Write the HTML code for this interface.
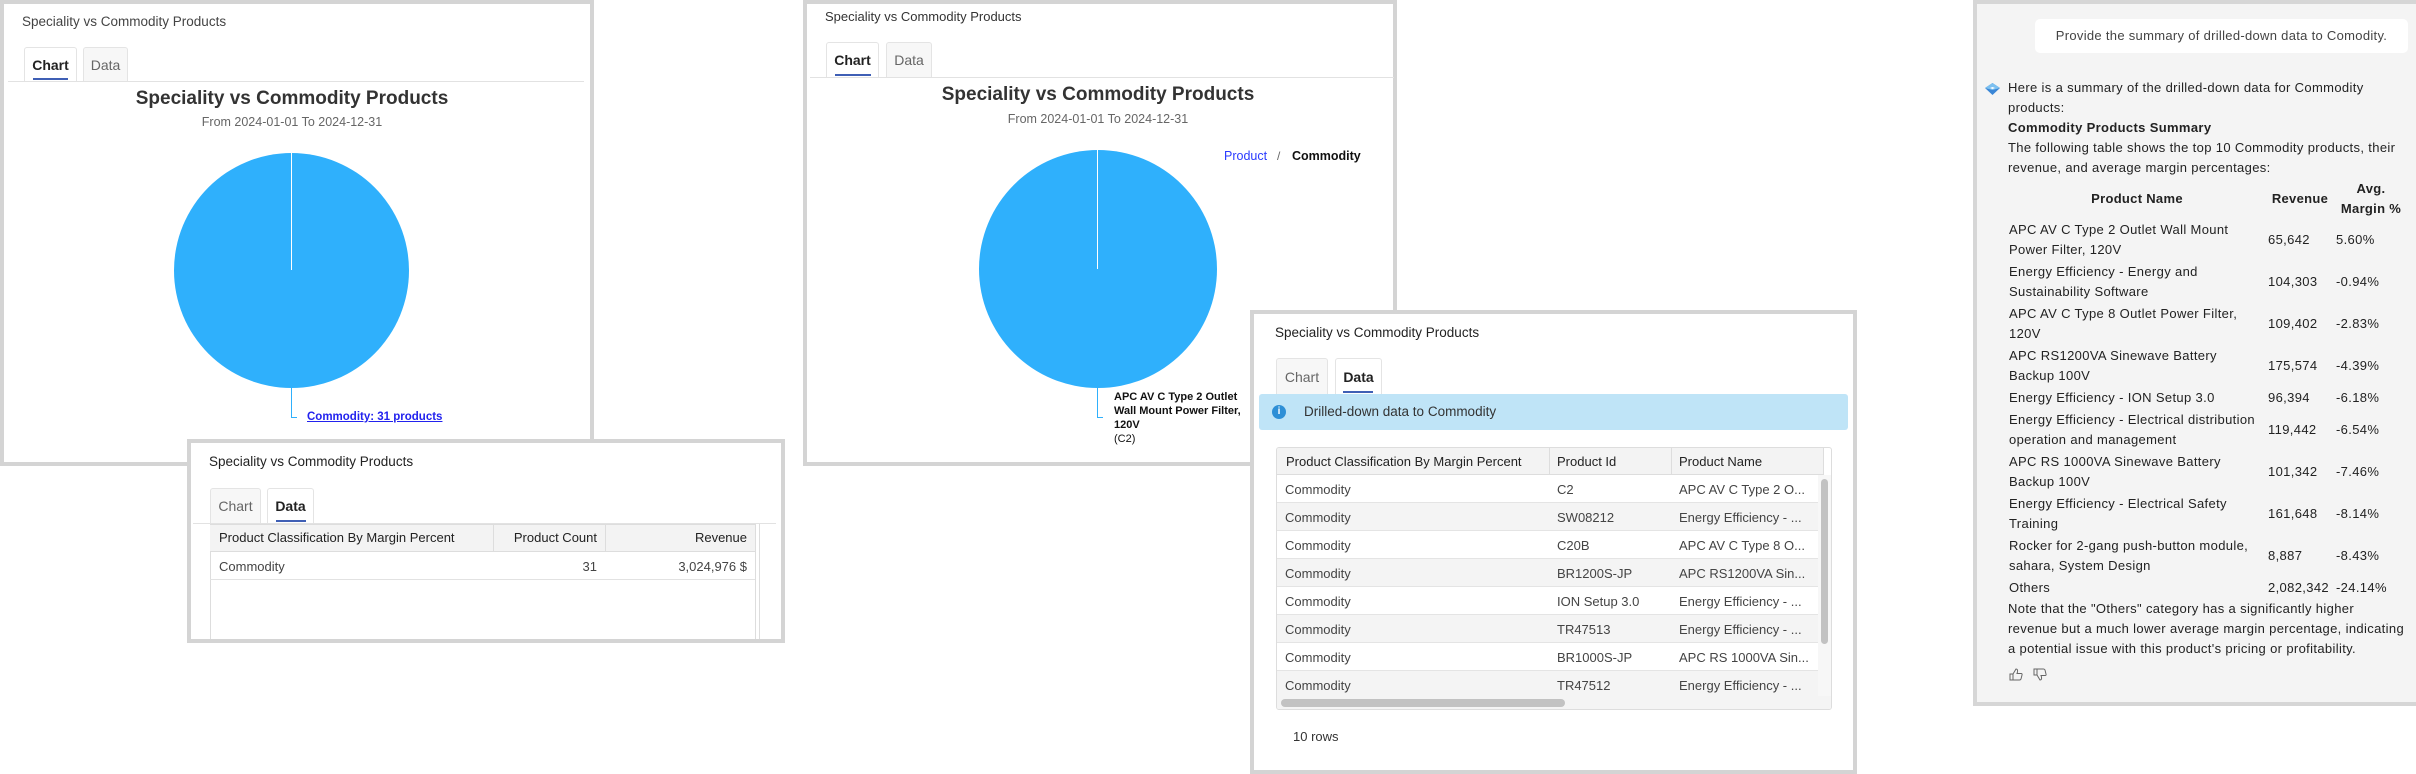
<!DOCTYPE html>
<html><head><meta charset="utf-8"><style>
*{margin:0;padding:0;box-sizing:border-box}
body{width:2416px;height:774px;background:#fff;position:relative;overflow:hidden;font-family:"Liberation Sans",sans-serif;color:#333}
.a{position:absolute;white-space:nowrap}
.panel{position:absolute;background:#fff;border:4px solid #d4d4d4}
.tab{position:absolute;border:1px solid #e4e4e4;border-bottom:none;border-radius:3px 3px 0 0;background:#f7f7f7;font-size:14px;color:#666;text-align:center}
.tab.on{background:#fff;color:#222;font-weight:bold}
.ul{position:absolute;height:2px;background:#3f5fb5}
.hl{position:absolute;height:1px;background:#e2e2e2}
.pie{position:absolute;border-radius:50%;background:#2fb0fc}
.vl{position:absolute;width:1px;background:#fff}
</style></head><body>

<!-- Panel A -->
<div class="panel" style="left:0;top:0;width:594px;height:466px"></div>
<div class="a" style="left:22px;top:14px;font-size:13.5px;color:#444">Speciality vs Commodity Products</div>
<div class="tab on" style="left:24px;top:47px;width:53px;height:34px;line-height:34px">Chart</div>
<div class="tab" style="left:83px;top:47px;width:45px;height:34px;line-height:34px">Data</div>
<div class="ul" style="left:33px;top:78px;width:35px"></div>
<div class="hl" style="left:8px;top:81px;width:576px"></div>
<div class="a" style="left:92px;width:400px;text-align:center;top:88px;font-size:19px;font-weight:bold;color:#333">Speciality vs Commodity Products</div>
<div class="a" style="left:92px;width:400px;text-align:center;top:115px;font-size:12.5px;color:#666">From 2024-01-01 To 2024-12-31</div>
<div class="pie" style="left:174px;top:153px;width:235px;height:235px"></div>
<div class="vl" style="left:291px;top:153px;height:117px"></div>
<div class="a" style="left:291px;top:388px;width:6px;height:30px;border-left:1px solid #2fb0fc;border-bottom:1px solid #2fb0fc"></div>
<div class="a" style="left:307px;top:411px;font-size:11.5px;font-weight:bold;color:#2222ee;text-decoration:underline">Commodity: 31 products</div>

<!-- Panel B -->
<div class="panel" style="left:187px;top:439px;width:598px;height:204px"></div>
<div class="a" style="left:209px;top:454px;font-size:13.5px;color:#222">Speciality vs Commodity Products</div>
<div class="tab" style="left:210px;top:488px;width:51px;height:35px;line-height:35px">Chart</div>
<div class="tab on" style="left:267px;top:488px;width:47px;height:35px;line-height:35px">Data</div>
<div class="ul" style="left:276px;top:520px;width:30px"></div>
<div class="hl" style="left:193px;top:523px;width:583px"></div>
<div class="a" style="left:210px;top:524px;width:550px;height:115px;border-left:1px solid #ddd;border-right:1px solid #ddd"></div>
<div class="a" style="left:210px;top:524px;width:545px;height:28px;background:#f3f3f3;border-top:1px solid #ddd;border-bottom:1px solid #ddd"></div>
<div class="a" style="left:493px;top:524px;width:1px;height:28px;background:#ddd"></div>
<div class="a" style="left:605px;top:524px;width:1px;height:28px;background:#ddd"></div>
<div class="a" style="left:755px;top:524px;width:1px;height:115px;background:#ddd"></div>
<div class="a" style="left:219px;top:530px;font-size:13px;color:#222">Product Classification By Margin Percent</div>
<div class="a" style="left:505px;width:92px;text-align:right;top:530px;font-size:13px;color:#222">Product Count</div>
<div class="a" style="left:610px;width:137px;text-align:right;top:530px;font-size:13px;color:#222">Revenue</div>
<div class="a" style="left:219px;top:559px;font-size:13px;color:#444">Commodity</div>
<div class="a" style="left:505px;width:92px;text-align:right;top:559px;font-size:13px;color:#444">31</div>
<div class="a" style="left:610px;width:137px;text-align:right;top:559px;font-size:13px;color:#444">3,024,976 $</div>
<div class="hl" style="left:210px;top:579px;width:545px"></div>

<!-- Panel C -->
<div class="panel" style="left:803px;top:0;width:594px;height:466px"></div>
<div class="a" style="left:825px;top:9px;font-size:13px;color:#333">Speciality vs Commodity Products</div>
<div class="tab on" style="left:826px;top:42px;width:53px;height:35px;line-height:35px">Chart</div>
<div class="tab" style="left:886px;top:42px;width:46px;height:35px;line-height:35px">Data</div>
<div class="ul" style="left:835px;top:74px;width:36px"></div>
<div class="hl" style="left:810px;top:77px;width:584px"></div>
<div class="a" style="left:898px;width:400px;text-align:center;top:84px;font-size:19px;font-weight:bold;color:#333">Speciality vs Commodity Products</div>
<div class="a" style="left:898px;width:400px;text-align:center;top:112px;font-size:12.5px;color:#666">From 2024-01-01 To 2024-12-31</div>
<div class="a" style="left:1224px;top:149px;font-size:12.5px;color:#2a3bff">Product</div>
<div class="a" style="left:1277px;top:149px;font-size:12px;color:#666">/</div>
<div class="a" style="left:1292px;top:149px;font-size:12.5px;font-weight:bold;color:#111">Commodity</div>
<div class="pie" style="left:979px;top:150px;width:238px;height:238px"></div>
<div class="vl" style="left:1097px;top:150px;height:119px"></div>
<div class="a" style="left:1097px;top:388px;width:6px;height:30px;border-left:1px solid #2fb0fc;border-bottom:1px solid #2fb0fc"></div>
<div class="a" style="left:1114px;top:390px;font-size:11px;line-height:14px;font-weight:bold;color:#111">APC AV C Type 2 Outlet<br>Wall Mount Power Filter,<br>120V<br><span style="font-weight:normal">(C2)</span></div>

<!-- Panel D -->
<div class="panel" style="left:1250px;top:310px;width:607px;height:464px"></div>
<div class="a" style="left:1275px;top:325px;font-size:13.5px;color:#222">Speciality vs Commodity Products</div>
<div class="tab" style="left:1276px;top:358px;width:52px;height:36px;line-height:36px">Chart</div>
<div class="tab on" style="left:1335px;top:358px;width:47px;height:36px;line-height:36px">Data</div>
<div class="ul" style="left:1343px;top:391px;width:30px"></div>
<div class="a" style="left:1259px;top:394px;width:589px;height:36px;background:#bfe4f7;border-radius:3px"></div>
<div class="a" style="left:1272px;top:405px;width:14px;height:14px;border-radius:50%;background:#2e8fd6;color:#fff;font-size:10px;font-weight:bold;text-align:center;line-height:14px">i</div>
<div class="a" style="left:1304px;top:404px;font-size:13.5px;color:#333">Drilled-down data to Commodity</div>
<div class="a" style="left:1276px;top:447px;width:556px;height:263px;border:1px solid #ddd;border-radius:3px;overflow:hidden">
  <div class="a" style="left:0;top:0;width:546px;height:27px;background:#f3f3f3;border-bottom:1px solid #ddd"></div>
  <div class="a" style="left:272px;top:0;width:1px;height:27px;background:#ddd"></div>
  <div class="a" style="left:394px;top:0;width:1px;height:27px;background:#ddd"></div>
  <div class="a" style="left:546px;top:0;width:1px;height:27px;background:#ddd"></div>
  <div class="a" style="left:9px;top:6px;font-size:13px;color:#222">Product Classification By Margin Percent</div>
  <div class="a" style="left:280px;top:6px;font-size:13px;color:#222">Product Id</div>
  <div class="a" style="left:402px;top:6px;font-size:13px;color:#222">Product Name</div>
  <div class="a" style="left:0;top:27px;width:541px">
    <div style="height:28px;background:#fff;border-bottom:1px solid #e4e4e4;position:relative"><span class="a" style="left:8px;top:7px;font-size:13px;color:#444">Commodity</span><span class="a" style="left:280px;top:7px;font-size:13px;color:#444">C2</span><span class="a" style="left:402px;top:7px;font-size:13px;color:#444">APC AV C Type 2 O...</span></div>
    <div style="height:28px;background:#f4f4f4;border-bottom:1px solid #e4e4e4;position:relative"><span class="a" style="left:8px;top:7px;font-size:13px;color:#444">Commodity</span><span class="a" style="left:280px;top:7px;font-size:13px;color:#444">SW08212</span><span class="a" style="left:402px;top:7px;font-size:13px;color:#444">Energy Efficiency - ...</span></div>
    <div style="height:28px;background:#fff;border-bottom:1px solid #e4e4e4;position:relative"><span class="a" style="left:8px;top:7px;font-size:13px;color:#444">Commodity</span><span class="a" style="left:280px;top:7px;font-size:13px;color:#444">C20B</span><span class="a" style="left:402px;top:7px;font-size:13px;color:#444">APC AV C Type 8 O...</span></div>
    <div style="height:28px;background:#f4f4f4;border-bottom:1px solid #e4e4e4;position:relative"><span class="a" style="left:8px;top:7px;font-size:13px;color:#444">Commodity</span><span class="a" style="left:280px;top:7px;font-size:13px;color:#444">BR1200S-JP</span><span class="a" style="left:402px;top:7px;font-size:13px;color:#444">APC RS1200VA Sin...</span></div>
    <div style="height:28px;background:#fff;border-bottom:1px solid #e4e4e4;position:relative"><span class="a" style="left:8px;top:7px;font-size:13px;color:#444">Commodity</span><span class="a" style="left:280px;top:7px;font-size:13px;color:#444">ION Setup 3.0</span><span class="a" style="left:402px;top:7px;font-size:13px;color:#444">Energy Efficiency - ...</span></div>
    <div style="height:28px;background:#f4f4f4;border-bottom:1px solid #e4e4e4;position:relative"><span class="a" style="left:8px;top:7px;font-size:13px;color:#444">Commodity</span><span class="a" style="left:280px;top:7px;font-size:13px;color:#444">TR47513</span><span class="a" style="left:402px;top:7px;font-size:13px;color:#444">Energy Efficiency - ...</span></div>
    <div style="height:28px;background:#fff;border-bottom:1px solid #e4e4e4;position:relative"><span class="a" style="left:8px;top:7px;font-size:13px;color:#444">Commodity</span><span class="a" style="left:280px;top:7px;font-size:13px;color:#444">BR1000S-JP</span><span class="a" style="left:402px;top:7px;font-size:13px;color:#444">APC RS 1000VA Sin...</span></div>
    <div style="height:28px;background:#f4f4f4;border-bottom:1px solid #e4e4e4;position:relative"><span class="a" style="left:8px;top:7px;font-size:13px;color:#444">Commodity</span><span class="a" style="left:280px;top:7px;font-size:13px;color:#444">TR47512</span><span class="a" style="left:402px;top:7px;font-size:13px;color:#444">Energy Efficiency - ...</span></div>
  </div>
  <div class="a" style="left:0;top:248px;width:556px;height:15px;background:#f4f4f4"></div>
  <div class="a" style="left:4px;top:251px;width:284px;height:8px;border-radius:4px;background:#c2c2c2"></div>
  <div class="a" style="left:541px;top:27px;width:14px;height:221px;background:#f7f7f7"></div>
  <div class="a" style="left:544px;top:31px;width:7px;height:165px;border-radius:4px;background:#c2c2c2"></div>
</div>
<div class="a" style="left:1293px;top:729px;font-size:13px;color:#333">10 rows</div>

<!-- Panel E -->
<div class="a" style="left:1973px;top:0;width:447px;height:706px;background:#f4f4f4;border:4px solid #d6d6d6"></div>
<div class="a" style="left:2035px;top:19px;width:373px;height:34px;background:#fff;border-radius:5px"></div>
<div class="a" style="left:2035px;width:373px;text-align:center;top:28px;font-size:13px;color:#444;letter-spacing:0.3px">Provide the summary of drilled-down data to Comodity.</div>
<svg class="a" style="left:1985px;top:83px" width="15" height="12" viewBox="0 0 15 12"><path d="M7.5 0 L15 5 L7.5 12 L0 5Z" fill="#3a86d6"/><path d="M7.5 0 L15 5 L7.5 7 L0 5Z" fill="#7cc0f0"/><path d="M5 5 L7.5 4 L10 5 L7.5 6Z" fill="#fff"/></svg>
<div class="a" style="left:2008px;top:78px;font-size:13px;line-height:20px;color:#222;letter-spacing:0.35px;white-space:normal;width:400px">Here is a summary of the drilled-down data for Commodity products:<br><b>Commodity Products Summary</b><br>The following table shows the top 10 Commodity products, their revenue, and average margin percentages:</div>
<div class="a" style="left:2037px;width:200px;text-align:center;top:191px;font-size:13px;font-weight:bold;color:#222;letter-spacing:0.3px">Product Name</div>
<div class="a" style="left:2260px;width:80px;text-align:center;top:191px;font-size:13px;font-weight:bold;color:#222;letter-spacing:0.3px">Revenue</div>
<div class="a" style="left:2331px;width:80px;text-align:center;top:179px;font-size:13px;line-height:20px;font-weight:bold;color:#222;letter-spacing:0.3px">Avg.<br>Margin %</div>
<div class="a" style="left:2009px;top:220px;font-size:13px;line-height:20px;color:#222;letter-spacing:0.35px">
<div style="height:42px">APC AV C Type 2 Outlet Wall Mount<br>Power Filter, 120V</div>
<div style="height:42px">Energy Efficiency - Energy and<br>Sustainability Software</div>
<div style="height:42px">APC AV C Type 8 Outlet Power Filter,<br>120V</div>
<div style="height:42px">APC RS1200VA Sinewave Battery<br>Backup 100V</div>
<div style="height:22px">Energy Efficiency - ION Setup 3.0</div>
<div style="height:42px">Energy Efficiency - Electrical distribution<br>operation and management</div>
<div style="height:42px">APC RS 1000VA Sinewave Battery<br>Backup 100V</div>
<div style="height:42px">Energy Efficiency - Electrical Safety<br>Training</div>
<div style="height:42px">Rocker for 2-gang push-button module,<br>sahara, System Design</div>
<div style="height:20px">Others</div>
</div>
<div class="a" style="left:2268px;top:230px;font-size:13px;line-height:20px;color:#222;letter-spacing:0.35px">
<div style="height:42px">65,642</div><div style="height:42px">104,303</div><div style="height:42px">109,402</div><div style="height:42px">175,574</div><div style="height:22px;margin-top:-10px">96,394</div><div style="height:42px;margin-top:10px">119,442</div><div style="height:42px">101,342</div><div style="height:42px">161,648</div><div style="height:42px">8,887</div><div style="margin-top:-10px">2,082,342</div>
</div>
<div class="a" style="left:2336px;top:230px;font-size:13px;line-height:20px;color:#222;letter-spacing:0.35px">
<div style="height:42px">5.60%</div><div style="height:42px">-0.94%</div><div style="height:42px">-2.83%</div><div style="height:42px">-4.39%</div><div style="height:22px;margin-top:-10px">-6.18%</div><div style="height:42px;margin-top:10px">-6.54%</div><div style="height:42px">-7.46%</div><div style="height:42px">-8.14%</div><div style="height:42px">-8.43%</div><div style="margin-top:-10px">-24.14%</div>
</div>
<div class="a" style="left:2008px;top:599px;font-size:13px;line-height:20px;color:#222;letter-spacing:0.35px;white-space:normal;width:398px">Note that the "Others" category has a significantly higher revenue but a much lower average margin percentage, indicating a potential issue with this product's pricing or profitability.</div>
<svg class="a" style="left:2009px;top:668px" width="14" height="13" viewBox="0 0 14 13" fill="none" stroke="#666" stroke-width="1"><path d="M1 6h3v6H1z M4 6 L7 1 Q9 1 8.5 4 L8 5.5 H12 Q13.5 5.5 13 7 L12 11 Q11.5 12 10.5 12 H4"/></svg>
<svg class="a" style="left:2033px;top:668px" width="14" height="13" viewBox="0 0 14 13" fill="none" stroke="#666" stroke-width="1"><path d="M1 1h3v6H1z M4 7 L7 12 Q9 12 8.5 9 L8 7.5 H12 Q13.5 7.5 13 6 L12 2 Q11.5 1 10.5 1 H4"/></svg>
</body></html>
